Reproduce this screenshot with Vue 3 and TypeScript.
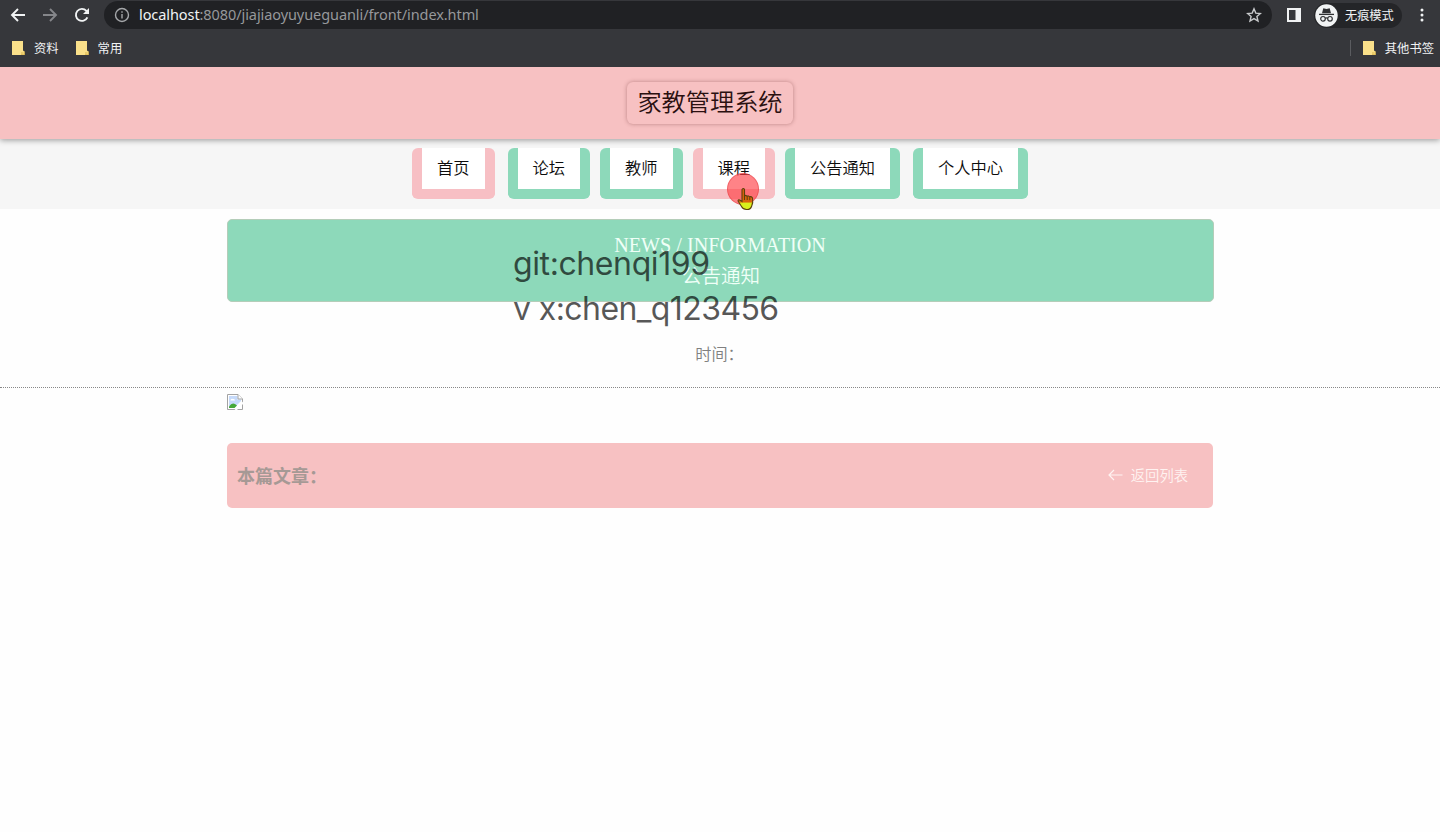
<script setup lang="ts">
interface NavItem {
  label: string
  active?: boolean
  wide?: boolean
}

const navItems: NavItem[] = [
  { label: '首页', active: true, wide: true },
  { label: '论坛' },
  { label: '教师' },
  { label: '课程', active: true },
  { label: '公告通知', wide: true },
  { label: '个人中心' },
]
const bookmarks: string[] = ['资料', '常用']
</script>

<template>
  <div class="window">
    <div class="chrome">
      <div class="toolbar">
        <svg class="nav-icon" width="16" height="16" viewBox="0 0 16 16"><path d="M15 8H2M8 2L2 8l6 6" /></svg>
        <svg class="nav-icon dim" width="16" height="16" viewBox="0 0 16 16"><path d="M1 8h13M8 2l6 6-6 6" /></svg>
        <svg class="nav-icon" width="16" height="16" viewBox="0 0 16 16"><path d="M13.4 10.3A6 6 0 1 1 12.4 3.9L14 5.5" /><path class="solid" d="M15 1v6H9z" /></svg>
        <div class="address">
          <svg class="info" width="16" height="16" viewBox="0 0 16 16"><circle cx="8" cy="8" r="6.5" /><path d="M8 7v4.5M8 4.2v1.6" /></svg>
          <span class="url"><b>localhost</b>:8080/jiajiaoyuyueguanli/front/index.html</span>
          <svg class="star" width="16" height="16" viewBox="0 0 16 16"><path d="M8 1.8l1.8 4.3 4.6.4-3.5 3 1.1 4.5L8 11.6 4 14l1.1-4.5-3.5-3 4.6-.4z" /></svg>
        </div>
        <svg class="panel" width="14" height="14" viewBox="0 0 14 14"><path fill-rule="evenodd" d="M0 0h14v14H0zM2 2v10h6.500V2z" /></svg>
        <div class="incognito">
          <svg width="23" height="23" viewBox="0 0 23 23">
            <circle cx="11.5" cy="11.5" r="11.2" fill="#f1f3f4" />
            <path d="M7 9.2l1.3-5 3.2.7 3.2-.7 1.3 5z" fill="#303134" />
            <path d="M4 10.4h15" stroke="#303134" stroke-width="1.3" />
            <g fill="none" stroke="#303134" stroke-width="1.2"><circle cx="8" cy="14.8" r="2.3" /><circle cx="15" cy="14.8" r="2.3" /><path d="M10.2 14.3q1.3-.8 2.6 0" /></g>
          </svg>
          <span>无痕模式</span>
        </div>
        <svg class="menu" width="4" height="14" viewBox="0 0 4 14"><circle cx="2" cy="2" r="1.5" /><circle cx="2" cy="7" r="1.5" /><circle cx="2" cy="12" r="1.5" /></svg>
      </div>
      <div class="bookmarks">
        <span v-for="name in bookmarks" :key="name" class="bookmark">
          <svg width="13" height="14" viewBox="0 0 13 14"><path d="M0 0h11v9.5l1.5 1V14H0z" fill="#fae08a" /><path d="M10 11v3M12.2 10.5V14H9" stroke="#d9b54c" fill="none" /></svg>
          <span>{{ name }}</span>
        </span>
        <span class="bookmark other">
          <svg width="13" height="14" viewBox="0 0 13 14"><path d="M0 0h11v9.5l1.5 1V14H0z" fill="#fae08a" /><path d="M10 11v3M12.2 10.5V14H9" stroke="#d9b54c" fill="none" /></svg>
          <span>其他书签</span>
        </span>
      </div>
    </div>

    <header class="site-header"><h1>家教管理系统</h1></header>

    <nav class="site-nav">
      <a v-for="item in navItems" :key="item.label" :class="{ active: item.active, wide: item.wide }">{{ item.label }}</a>
    </nav>

    <main>
      <section class="banner">
        <p class="en">NEWS / INFORMATION</p>
        <p class="cn">公告通知</p>
      </section>
      <p class="time">时间：</p>
      <div class="divider"></div>
      <div class="content">
        <svg class="broken" width="16" height="16" viewBox="0 0 16 16">
          <path d="M.5.5H11l4.500 4.500V15.500H.5z" fill="#fff" stroke="#a3a3a3" />
          <path d="M2 2h8.500v3.500H14V7l-7 7H2z" fill="#c6dafa" />
          <path d="M2 14v-1.500q3-4.500 6-2.500l2 1.500L7.500 14z" fill="#45a838" />
          <path d="M3.500 6q1-2 2.500-1 2-.5 2 1.500H3.500z" fill="#fff" />
          <path d="M11 .5V5h4.500" fill="#fff" stroke="#a3a3a3" />
          <path d="M16 7.500L7.500 16H10L16 10z" fill="#fff" />
        </svg>
      </div>
      <section class="article-bar">
        <strong>本篇文章：</strong>
        <a class="back">
          <svg width="15" height="12" viewBox="0 0 15 12"><path d="M14.500 6H1M6 1L1 6l5 5" /></svg>
          <span>返回列表</span>
        </a>
      </section>
    </main>

    <div class="watermark"><span class="git">git:chenqi199</span><span class="vx">v x:chen_q123456</span></div>

    <div class="click-spot"></div>
    <svg class="pointer" width="18" height="24" viewBox="0 0 18 24">
      <defs><linearGradient id="handFill" x1="0" y1="0" x2="0" y2="1"><stop offset="0.64" stop-color="#d9620d" /><stop offset="0.7" stop-color="#d8f01c" /></linearGradient></defs>
      <path d="M5 2.500q1.500-2 2.500 0V9q1.500-1.300 2.500.3 1.700-1 2.500.5 2.200-.8 3 1.200.8 5-.8 8-1 3.500-4.500 3.500-4 .3-5.700-3L1 14q.3-2 2.300-.8L5 14.500z" fill="url(#handFill)" stroke="#5b410a" stroke-width="1.100" />
      <path d="M7.500 9v4M10.200 9.500V13M12.800 10.200v3" stroke="#5b410a" fill="none" />
    </svg>
  </div>
</template>

<style>
body {
  margin: 0;
  background: #fefefe;
}
</style>

<style scoped>
.window {
  position: relative;
  height: 832px;
  overflow: hidden;
  background: #fefefe;
  font-family: "Noto Sans CJK SC", sans-serif;
}
p, h1 { margin: 0; font-weight: 400; }
svg { flex: none; display: block; }

.chrome {
  position: relative;
  z-index: 1;
  box-sizing: border-box;
  height: 67px;
  background: #36373b;
  color: #f1f3f4;
}
.toolbar {
  display: flex;
  align-items: center;
  height: 30px;
  padding-left: 10px;
}
.nav-icon {
  margin-right: 16px;
  fill: none;
  stroke: #f1f3f4;
  stroke-width: 1.9;
}
.nav-icon.dim { stroke: #85868a; }
.nav-icon .solid { fill: #f1f3f4; stroke: none; }
.address {
  display: flex;
  align-items: center;
  box-sizing: border-box;
  width: 1168px;
  height: 28px;
  margin-left: -2px;
  padding: 0 10px;
  border-radius: 14px;
  background: #202124;
}
.info, .star {
  fill: none;
  stroke: #a5a7aa;
  stroke-width: 1.4;
}
.star { margin-left: auto; stroke: #c8cacc; }
.url {
  margin-left: 9px;
  padding-bottom: 2px;
  color: #96989b;
  font: 14.500px/20px "Noto Sans", "Open Sans", sans-serif;
  letter-spacing: -0.080px;
  white-space: nowrap;
}
.url b { color: #f1f3f4; font-weight: 400; }
.panel { margin-left: 15px; fill: #f1f3f4; }
.incognito {
  display: flex;
  align-items: center;
  width: 88px;
  height: 25px;
  margin-left: 13px;
  border-radius: 13px;
  background: #242528;
  font-size: 12.200px;
  white-space: nowrap;
}
.incognito svg { margin: 0 7px 0 1px; }
.menu { margin-left: 18px; fill: #f1f3f4; }
.bookmarks {
  display: flex;
  align-items: center;
  height: 36px;
  padding: 0 6px 0 12px;
  font-size: 12.300px;
}
.bookmark {
  display: flex;
  align-items: center;
  gap: 9px;
  margin-right: 17px;
}
.bookmark span { padding-bottom: 1px; }
.bookmark.other {
  height: 16px;
  margin: 0 0 0 auto;
  padding-left: 12px;
  border-left: 1px solid #5b5c60;
}

.site-header {
  position: relative;
  display: flex;
  align-items: center;
  justify-content: center;
  box-sizing: border-box;
  height: 72px;
  padding: 0 20px 1px 0;
  background: #f7c1c2;
  box-shadow: 0 1px 6px rgba(0, 0, 0, 0.4);
}
.site-header h1 {
  padding: 0 10px 4px;
  border-radius: 6px;
  color: #2a1010;
  font-size: 24.200px;
  font-weight: 350;
  line-height: 38px;
  box-shadow: 0 0 4px rgba(100, 40, 40, 0.4);
}

.site-nav {
  display: flex;
  justify-content: center;
  align-items: flex-start;
  box-sizing: border-box;
  height: 70px;
  padding-top: 9px;
  gap: 10px;
  background: #f6f6f6;
}
.site-nav a {
  box-sizing: border-box;
  height: 51px;
  padding: 0 15px;
  border: solid #8dd9ba;
  border-width: 0 10px 10px;
  border-radius: 6px;
  background: #fff;
  color: #0c0c0c;
  font-size: 16.250px;
  font-weight: 350;
  line-height: 38px;
}
.site-nav a.active { border-color: #f7bfc4; }
.site-nav a.wide { margin-right: 3px; }

main { display: flex; flex-direction: column; }
.banner, .content, .article-bar {
  box-sizing: border-box;
  width: 987px;
  margin: 0 auto;
}
.banner {
  height: 83px;
  margin-top: 10px;
  padding-top: 10px;
  border: 1px solid #b4cdb9;
  border-radius: 5px;
  background: #8dd9ba;
  color: #effff7;
  font-size: 19.500px;
  line-height: 30px;
  text-align: center;
}
.banner .en { font-family: "Liberation Serif", serif; font-size: 20.150px; }
.banner .cn { padding-left: 2px; font-weight: 350; }
.time {
  height: 24px;
  margin: 39px 0 22px;
  padding-right: 1px;
  color: #808080;
  font-size: 16.200px;
  font-weight: 350;
  line-height: 24px;
  text-align: center;
}
.divider { border-top: 1px dotted #888; }
.content { height: 55px; padding-top: 6px; }
.article-bar {
  display: flex;
  align-items: center;
  justify-content: space-between;
  width: 986px;
  height: 65px;
  padding: 0 25px 2px 10px;
  border-radius: 5px;
  background: #f7c1c2;
}
.article-bar strong { color: #a69995; font-size: 18px; }
.back {
  display: flex;
  align-items: center;
  gap: 8px;
  color: #fff3f1;
  font-size: 14.300px;
  font-weight: 350;
}
.back svg { fill: none; stroke: #fff3f1; stroke-width: 1.200; }

.watermark {
  position: absolute;
  top: 241px;
  left: 513px;
  display: flex;
  flex-direction: column;
  color: rgba(0, 0, 0, 0.67);
  font: 400 32px/45px Inter, sans-serif;
  white-space: pre;
}
.git { letter-spacing: -0.400px; }
.vx { letter-spacing: -0.580px; }
.click-spot {
  position: absolute;
  box-sizing: border-box;
  top: 173px;
  left: 727px;
  width: 32px;
  height: 32px;
  border: 1px solid rgba(225, 60, 65, 0.45);
  border-radius: 50%;
  background: rgba(255, 65, 70, 0.65);
}
.pointer { position: absolute; top: 187px; left: 737px; }
</style>
